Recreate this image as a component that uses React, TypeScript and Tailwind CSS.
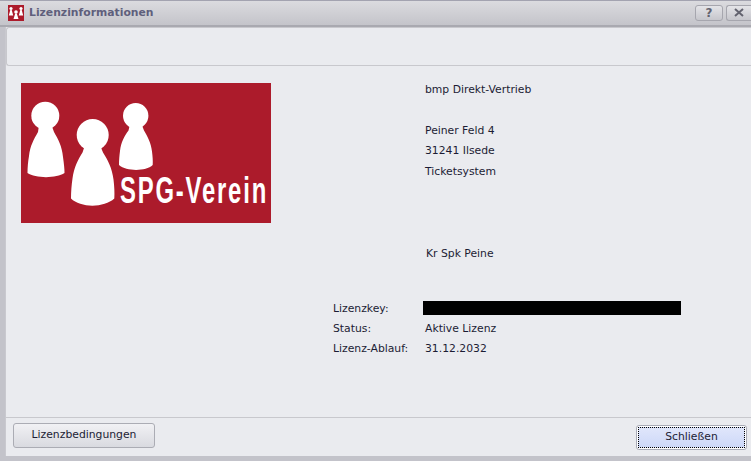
export default function App() {
  const font = { fontFamily: '"DejaVu Sans", sans-serif' };
  return (
    <div className="w-[751px] h-[461px] overflow-hidden flex flex-col bg-[#c3c3ca] text-[10.8px] text-[#1c1c34]" style={font}>
      {/* Title bar */}
      <div className="h-[27px] shrink-0 flex items-center pl-2 border-t border-t-[#a3a3b0] border-b-2 border-b-[#a9a9b0] bg-gradient-to-b from-[#dbdbdf] to-[#c4c4ca]">
        <svg width="16" height="16" viewBox="0 0 16 16" className="shrink-0">
          <rect width="16" height="16" fill="#ac1b2b" />
          <g fill="#fff">
            <circle cx="3" cy="3.5" r="1.6" /><path d="M2.300 5h1.400L5.200 10.500H.8z" />
            <circle cx="8" cy="7" r="1.800" /><path d="M7.200 8.500h1.600L10.500 14h-5z" />
            <circle cx="13" cy="3.500" r="1.600" /><path d="M12.300 5h1.400l1.500 5.500h-4.400z" />
          </g>
        </svg>
        <span className="ml-[5px] mt-[1px] font-bold text-[10.8px] text-[#5f5f7c]">Lizenzinformationen</span>
        <div className="ml-auto flex gap-[3px] mb-[1px]">
          <div className="w-[28px] h-[16px] rounded-[3px] border border-[#a6a6ae] bg-gradient-to-b from-[#e4e4e8] to-[#c6c6cc] flex items-center justify-center font-bold text-[12px] text-[#63636f]">?</div>
          <div className="w-[25px] h-[16px] rounded-l-[3px] border border-r-0 border-[#a6a6ae] bg-gradient-to-b from-[#e4e4e8] to-[#c6c6cc] flex items-center justify-center">
            <svg width="10" height="9" viewBox="0 0 10 9"><path d="M1 1l8 7M9 1L1 8" stroke="#63636f" strokeWidth="2" /></svg>
          </div>
        </div>
      </div>
      {/* Window body */}
      <div className="flex-1 min-h-0 ml-[5px] mb-[5px] flex flex-col bg-[#eaebef] border-l border-[#c9c9cf]">
        <div className="h-[39px] shrink-0 rounded-l-[3px] border border-r-0 border-[#c8c8cd] bg-[#eaebef]" />
        <div className="flex-1 min-h-0 flex">
          <svg width="250" height="140" viewBox="0 0 250 140" className="shrink-0 ml-[15px] mt-[17px]">
            <rect width="250" height="140" fill="#ac1b2b" />
            <g fill="#fff">
              <circle cx="24.3" cy="32.7" r="14" />
              <path d="M18 42h12.500l2.500 7c4 7 8 14 9 25 1 7 1.500 12 1.500 16-8 5.500-29 5.500-37 0 0-6 .5-11 1.500-17 1-10 5-17 9-24z" />
              <circle cx="71.700" cy="52" r="16" />
              <path d="M64 62h15l3 7.500c4.500 7 9 15 10.500 27 .8 7 1.200 13 .8 19-10 9.500-34 9.500-43.300 0 0-7 .5-13 1.500-20 1.500-11 5.500-19 10-26z" />
              <circle cx="114.700" cy="32.700" r="12.700" />
              <path d="M109 41h11.500l2.500 6.500c3.500 6 7 12 8 21 .6 5 1 9 .7 13.500-7 6.500-26 6.500-33.700 0 0-5 .4-9 1-14 1-9 4.500-15 8.500-20.500z" />
            </g>
            <g transform="translate(99 119.500) scale(.645 1)">
              <text x="0" y="0" fill="#fff" fontSize="37" fontWeight="700" letterSpacing="2.800" style={{ fontFamily: '"Liberation Sans", sans-serif' }}>SPG-Verein</text>
            </g>
          </svg>
          <div className="ml-[62px] mt-[14px] flex flex-col">
            <div className="ml-[92px] flex flex-col">
              <span className="h-[20px] leading-[20px]">bmp Direkt-Vertrieb</span>
              <span className="h-[21px]" />
              <span className="h-[20px] leading-[20px]">Peiner Feld 4</span>
              <span className="h-[21px] leading-[20px]">31241 Ilsede</span>
              <span className="h-[20px] leading-[20px]">Ticketsystem</span>
              <span className="ml-[1px] mt-[62px] h-[20px] leading-[20px]">Kr Spk Peine</span>
            </div>
            <div className="mt-[35px] grid grid-cols-[92px_auto] auto-rows-[20px] leading-[20px]">
              <span>Lizenzkey:</span>
              <div className="w-[258px] h-[14px] mt-[2px] -ml-[2px] bg-black" />
              <span>Status:</span>
              <span>Aktive Lizenz</span>
              <span>Lizenz-Ablauf:</span>
              <span>31.12.2032</span>
            </div>
          </div>
        </div>
        <div className="h-[39px] shrink-0 border-t border-[#c8c8cd] flex items-start justify-between pl-[7px] pr-[4px]">
          <button className="mt-[5px] w-[142px] h-[25px] rounded-[3px] border border-[#abacb4] bg-gradient-to-b from-[#f1f1f4] to-[#d9dae0] text-[#1c1c34]">Lizenzbedingungen</button>
          <button className="mt-[7px] w-[111px] h-[25px] rounded-[3px] border border-[#a9abb6] bg-white p-[1px] text-[#1c1c34]">
            <span className="w-full h-full flex items-center justify-center border border-dotted border-black bg-gradient-to-b from-[#e0e6fb] to-[#cdd8f8]">Schließen</span>
          </button>
        </div>
      </div>
    </div>
  );
}
